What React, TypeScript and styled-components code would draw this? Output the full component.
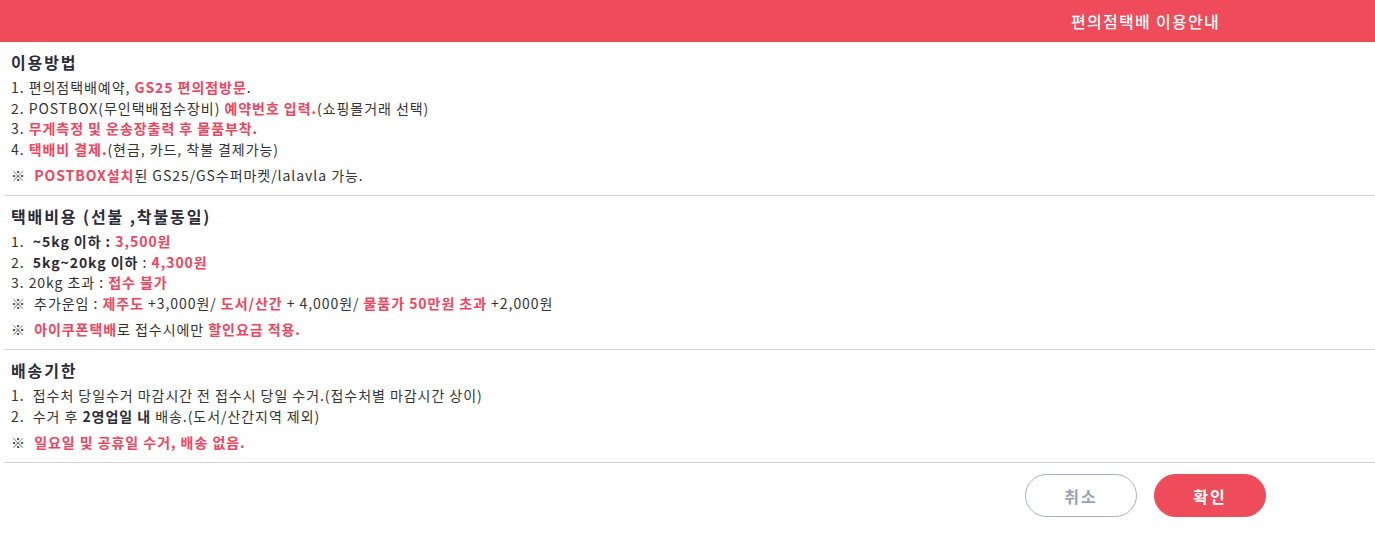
import styled, { createGlobalStyle } from 'styled-components';

const GlobalStyle = createGlobalStyle`
	body {
		margin: 0;
		background: #fff;
		font-family: 'Noto Sans CJK KR', 'Noto Sans', sans-serif;
		color: #333;
	}
`;

const Wrapped = styled.div`
	width: 100%;
`;

const Header = styled.div`
	height: 42px;
	background: #ee4c5a;
	display: flex;
	align-items: center;
	justify-content: flex-end;
	padding-right: 155px;
	box-sizing: border-box;
`;

const Title = styled.h1`
	margin: 0;
	font-size: 16px;
	font-weight: 500;
	color: #fff;
	letter-spacing: 1.3px;
`;

const Body = styled.div`
	margin-left: 4px;
`;

const Section = styled.div`
	padding: 9px 7px 10px;
	border-bottom: 1px solid #d4d4d4;
`;

const Heading = styled.h2`
	margin: 0 0 4px;
	font-size: 16px;
	line-height: 22px;
	font-weight: 700;
	letter-spacing: 1.9px;
	color: #2b2b3a;
`;

const Line = styled.p<{ note?: boolean }>`
	margin: ${(props) => (props.note ? '5.5px 0 0' : '0')};
	font-size: 14px;
	line-height: 20.5px;
	letter-spacing: 0.95px;
	white-space: pre;
`;

const Red = styled.b`
	color: #ef4560;
	font-weight: 700;
`;

const Strong = styled.b`
	color: #2b2b3a;
	font-weight: 700;
`;

const Footer = styled.div`
	display: flex;
	justify-content: flex-end;
	gap: 17px;
	padding: 11px 109px 0 0;
`;

const Button = styled.button<{ primary?: boolean }>`
	width: 112px;
	height: 43px;
	border-radius: 22px;
	font-family: inherit;
	font-size: 16px;
	font-weight: 700;
	letter-spacing: 2px;
	cursor: pointer;
	border: 1px solid ${(props) => (props.primary ? '#ee4c5a' : '#a8b2c6')};
	background: ${(props) => (props.primary ? '#ee4c5a' : '#fff')};
	color: ${(props) => (props.primary ? '#fff' : '#9aa2b3')};
`;

export default function App() {
	return (
		<Wrapped>
			<GlobalStyle />
			<Header>
				<Title>편의점택배 이용안내</Title>
			</Header>
			<Body>
				<Section>
					<Heading>이용방법</Heading>
					<Line>
						1. 편의점택배예약, <Red>GS25 편의점방문</Red>.
					</Line>
					<Line>
						2. POSTBOX(무인택배접수장비) <Red>예약번호 입력.</Red>(쇼핑몰거래 선택)
					</Line>
					<Line>
						3. <Red>무게측정 및 운송장출력 후 물품부착.</Red>
					</Line>
					<Line>
						4. <Red>택배비 결제.</Red>(현금, 카드, 착불 결제가능)
					</Line>
					<Line note>
						※  <Red>POSTBOX설치</Red>된 GS25/GS수퍼마켓/lalavla 가능.
					</Line>
				</Section>
				<Section>
					<Heading>택배비용 (선불 ,착불동일)</Heading>
					<Line>
						1.  <Strong>~5kg 이하 : </Strong>
						<Red>3,500원</Red>
					</Line>
					<Line>
						2.  <Strong>5kg~20kg 이하</Strong> : <Red>4,300원</Red>
					</Line>
					<Line>
						3. 20kg 초과 : <Red>접수 불가</Red>
					</Line>
					<Line>
						※  추가운임 : <Red>제주도</Red> +3,000원/ <Red>도서/산간</Red> + 4,000원/ <Red>물품가 50만원 초과</Red> +2,000원
					</Line>
					<Line note>
						※  <Red>아이쿠폰택배</Red>로 접수시에만 <Red>할인요금 적용.</Red>
					</Line>
				</Section>
				<Section>
					<Heading>배송기한</Heading>
					<Line>1.  접수처 당일수거 마감시간 전 접수시 당일 수거.(접수처별 마감시간 상이)</Line>
					<Line>
						2.  수거 후 <Strong>2영업일 내</Strong> 배송.(도서/산간지역 제외)
					</Line>
					<Line note>
						※  <Red>일요일 및 공휴일 수거, 배송 없음.</Red>
					</Line>
				</Section>
			</Body>
			<Footer>
				<Button>취소</Button>
				<Button primary>확인</Button>
			</Footer>
		</Wrapped>
	);
}
